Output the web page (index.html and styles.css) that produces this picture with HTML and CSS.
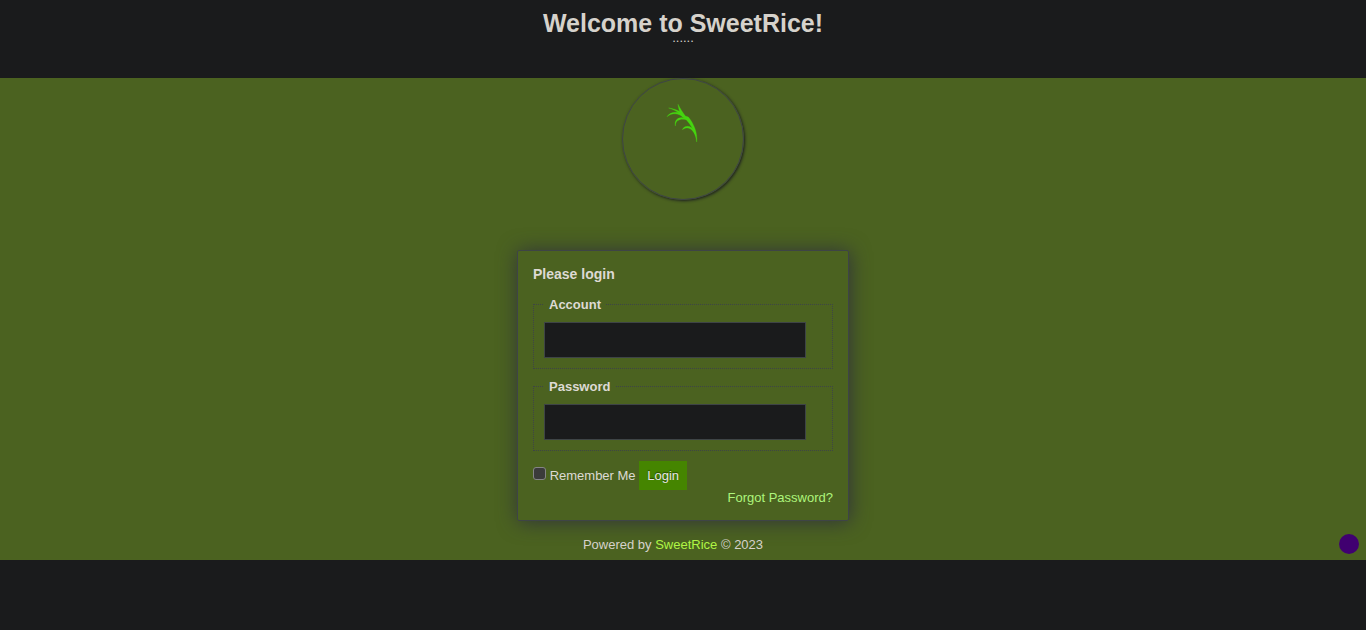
FILE: index.html
```html
<!DOCTYPE html>
<html lang="en">
<head>
<meta charset="utf-8">
<title>Welcome to SweetRice!</title>
<link rel="stylesheet" href="styles.css">
</head>
<body>
<header class="header">
  <h1 class="title">Welcome to SweetRice!</h1>
  <div class="subtitle">......</div>
</header>
<main class="main">
  <div class="logo">
    <svg class="leaf" viewBox="0 0 165 165" aria-hidden="true">
      <path d="M125 141C121 108 103 79 79 61C74 52 71 42 69 28C76 42 83 52 91 63L100 66C118 88 128 116 125 141Z"/>
      <path d="M41 39C62 42 77 48 90 64L83 66C73 52 60 45 41 39Z"/>
      <path d="M36 65C45 51 65 48 82 57L99 71L91 72C73 54 52 51 36 65Z"/>
      <path d="M61 93C56 73 75 62 94 71L102 76C81 69 61 72 61 93Z"/>
      <path d="M82 104C90 88 110 92 119 109L122 122C112 100 97 93 82 104Z"/>
    </svg>
  </div>
  <form class="card" onsubmit="return false">
    <h2 class="heading">Please login</h2>
    <fieldset class="group">
      <legend class="legend"><label for="user">Account</label></legend>
      <input class="field" id="user" type="text">
    </fieldset>
    <fieldset class="group">
      <legend class="legend"><label for="pass">Password</label></legend>
      <input class="field" id="pass" type="password">
    </fieldset>
    <div class="actions">
      <input class="check" id="remember" type="checkbox">
      <label for="remember">Remember Me</label>
      <button class="login" type="submit">Login</button>
    </div>
    <a class="forgot" href="#forgot">Forgot Password?</a>
  </form>
  <footer class="footer">
    <p class="powered">Powered by <a class="brand" href="#sweetrice">SweetRice</a> © 2023</p>
    <button class="dot" type="button" aria-label="Change background"></button>
  </footer>
</main>
</body>
</html>
```
FILE: styles.css
```css
* { box-sizing: border-box; }
body {
  margin: 0;
  background: #1a1b1c;
  color: #d6d2cb;
  font: 13px/15px "Liberation Sans", Arial, sans-serif;
}
a { text-decoration: none; }
.header {
  height: 78px;
  padding-top: 10px;
  text-align: center;
}
.title {
  margin: 0;
  font-size: 25px;
  line-height: 26px;
}
.subtitle { line-height: 4px; }
.main {
  background: #4b6220;
}
.logo {
  width: 122px;
  height: 122px;
  margin: 0 auto 50px;
  padding: 16px 0 0 32px;
  border: 1px solid #3e4446;
  border-radius: 50%;
  box-shadow: 1px 1px 3px #1c1e20;
}
.leaf {
  display: block;
  width: 55px;
  height: 55px;
  fill: #45d510;
  stroke: #45d510;
  stroke-width: 1;
}
.card {
  width: 332px;
  margin: 0 auto;
  padding: 15px;
  border: 1px solid #3e4446;
  border-radius: 2px;
  box-shadow: 1px 1px 20px #30343a;
  color: #dddad4;
}
.heading {
  margin: 0 0 15px;
  font-size: 14px;
  line-height: 16px;
}
.group {
  margin: 0 0 10px;
  padding: 10px;
  border: 1px dotted #3e4446;
}
.legend {
  padding: 0 5px;
  font-weight: bold;
}
.field {
  display: block;
  width: 262px;
  height: 36px;
  padding: 8px;
  border: 1px solid #3e4446;
  background: #1a1b1c;
  color: inherit;
  font: inherit;
}
.check {
  appearance: none;
  width: 13px;
  height: 13px;
  margin: 0;
  border: 1px solid #858585;
  border-radius: 3px;
  background: #3b3b3b;
}
.login {
  padding: 7px 8px;
  border: 0;
  background: #458500;
  color: #e8e6e3;
  font: inherit;
  text-shadow: 0 -1px 1px #234500;
}
.forgot {
  display: block;
  width: fit-content;
  margin-left: auto;
  color: #adf57c;
}
.footer {
  display: flex;
  align-items: center;
  padding: 13px 7px 6px 0;
}
.powered {
  flex: 1;
  margin: 0;
  padding-left: 7px;
  text-align: center;
}
.brand { color: #aff545; }
.dot {
  width: 20px;
  height: 20px;
  padding: 0;
  border: 0;
  border-radius: 50%;
  background: #400070;
}
```
